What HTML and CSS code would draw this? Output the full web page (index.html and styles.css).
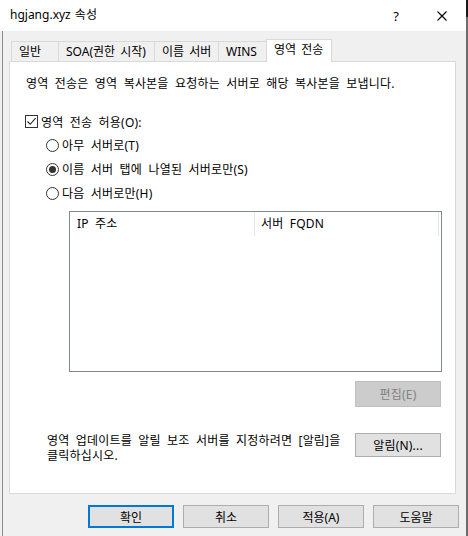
FILE: index.html
```html
<!DOCTYPE html>
<html lang="ko">
<head>
  <meta charset="UTF-8" />
  <title>hgjang.xyz 속성</title>
  <link rel="stylesheet" href="styles.css">
</head>
<body>

<div class="screen">
  <div class="window">
    <div class="titlebar">
      <span class="title">hgjang.xyz 속성</span>
      <span class="help">?</span>
      <span class="close">
        <svg width="10" height="10" viewBox="0 0 10 10"><path d="M0.5 0.5 L9.5 9.5 M9.5 0.5 L0.5 9.5" stroke="#000" stroke-width="1.1" fill="none"/></svg>
      </span>
    </div>

    <div class="dialog">
      <div class="tabs">
        <div class="tab t-general">일반</div>
        <div class="tab t-soa">SOA(권한 시작)</div>
        <div class="tab t-ns">이름 서버</div>
        <div class="tab t-wins">WINS</div>
        <div class="tab active t-xfer">영역 전송</div>
      </div>

      <div class="panel">
        <p class="desc">영역 전송은 영역 복사본을 요청하는 서버로 해당 복사본을 보냅니다.</p>

        <div class="check-row">
          <span class="checkbox">
            <svg width="11" height="11" viewBox="0 0 11 11"><path d="M1.5 5.5 L4.2 8.3 L9.6 2.2" stroke="#222" stroke-width="1.1" fill="none"/></svg>
          </span>
          <span>영역 전송 허용(O):</span>
        </div>

        <div class="radios">
          <div class="radio-row"><span class="radio"></span><span>아무 서버로(T)</span></div>
          <div class="radio-row"><span class="radio on"></span><span>이름 서버 탭에 나열된 서버로만(S)</span></div>
          <div class="radio-row"><span class="radio"></span><span>다음 서버로만(H)</span></div>
        </div>

        <div class="listview">
          <div class="lv-head">
            <div class="col col-ip">IP 주소</div>
            <div class="col col-fqdn">서버 FQDN</div>
          </div>
        </div>

        <div class="edit-row">
          <button class="btn btn-edit" disabled>편집(E)</button>
        </div>

        <div class="notify">
          <p>영역 업데이트를 알릴 보조 서버를 지정하려면 [알림]을<br>클릭하십시오.</p>
          <button class="btn btn-notify">알림(N)...</button>
        </div>
      </div>

      <div class="actions">
        <button class="btn btn-action default">확인</button>
        <button class="btn btn-action">취소</button>
        <button class="btn btn-action">적용(A)</button>
        <button class="btn btn-action">도움말</button>
      </div>
    </div>
  </div>
  <div class="edge"></div>
</div>

</body>
</html>
```

FILE: styles.css
```css
html, body {
  margin: 0;
  padding: 0;
  font-family: "Noto Sans", "Noto Sans CJK KR", sans-serif;
  font-size: 12px;
  color: #000;
  background: #f0f0f0;
}

.screen {
  display: flex;
  width: 468px;
  height: 536px;
  overflow: hidden;
}

.window {
  width: 466px;
  display: flex;
  flex-direction: column;
}

.edge {
  width: 2px;
  background: linear-gradient(to bottom, #1a1a1a 17px, #6d6d6d 17px);
}

/* title bar */
.titlebar {
  height: 31px;
  background: #fff;
  display: flex;
  align-items: center;
  padding: 0 19px 0 10px;
}

.title {
  line-height: 16px;
  padding-bottom: 1px;
  word-spacing: 1px;
}

.help {
  margin-left: auto;
  margin-right: 38px;
  font-size: 13px;
  line-height: 16px;
}

.close {
  display: flex;
  width: 10px;
  height: 10px;
}

/* dialog body */
.dialog {
  flex: 1;
  background: linear-gradient(to right, #f0f0f0 2px, #8c8c8c 2px, #8c8c8c 3px, #f0f0f0 3px);
  display: flex;
  flex-direction: column;
}

.tabs {
  display: flex;
  align-items: flex-end;
  padding: 8px 0 0 11px;
  word-spacing: 2px;
}

.tab {
  box-sizing: border-box;
  height: 20px;
  border: 1px solid #d9d9d9;
  border-bottom: none;
  margin-right: -1px;
  background: #f0f0f0;
  line-height: 19px;
  padding-left: 7px;
  white-space: nowrap;
}

.t-general { width: 48px; }
.t-soa { width: 97px; }
.t-ns { width: 65px; }
.t-wins { width: 49px; }

.tab.active {
  width: 66px;
  height: 23px;
  background: #fff;
  margin-bottom: -1px;
  position: relative;
  z-index: 1;
  line-height: 20px;
}

.panel {
  box-sizing: border-box;
  width: 447px;
  height: 433px;
  margin-left: 9px;
  background: #fff;
  border: 1px solid #d9d9d9;
  padding: 14px 14px 0 15px;
  display: flex;
  flex-direction: column;
  letter-spacing: 0.2px;
  word-spacing: 3px;
}

.desc {
  margin: 0 0 0 1px;
  line-height: 15px;
}

.check-row {
  display: flex;
  align-items: center;
  height: 23px;
  margin-top: 19px;
  gap: 3px;
}

.checkbox {
  box-sizing: border-box;
  width: 13px;
  height: 13px;
  border: 1px solid #333;
  background: #fff;
  display: flex;
  align-items: center;
  justify-content: center;
}

.radios {
  padding-left: 21px;
}

.radio-row {
  display: flex;
  align-items: center;
  height: 24px;
  gap: 3px;
}

.radio {
  box-sizing: border-box;
  width: 13px;
  height: 13px;
  border: 1px solid #333;
  border-radius: 50%;
  background: #fff;
  display: flex;
  align-items: center;
  justify-content: center;
}

.radio.on::after {
  content: "";
  width: 7px;
  height: 7px;
  border-radius: 50%;
  background: #333;
}

.listview {
  box-sizing: border-box;
  width: 373px;
  height: 161px;
  margin: 6px 0 0 44px;
  border: 1px solid #828790;
  background: #fff;
}

.lv-head {
  display: flex;
  height: 24px;
}

.col {
  box-sizing: border-box;
  height: 24px;
  line-height: 24px;
  border-right: 1px solid #e5e5e5;
  white-space: nowrap;
}

.col-ip {
  width: 185px;
  padding-left: 7px;
}

.col-fqdn {
  width: 184px;
  padding-left: 6px;
}

/* buttons */
.btn {
  box-sizing: border-box;
  font-family: inherit;
  font-size: 12px;
  letter-spacing: inherit;
  color: #000;
  background: #e1e1e1;
  border: 1px solid #adadad;
  border-radius: 0;
  padding: 0;
  margin: 0;
}

.edit-row {
  display: flex;
  justify-content: flex-end;
  margin-top: 9px;
}

.btn-edit {
  width: 86px;
  height: 26px;
  background: #cccccc;
  border-color: #bfbfbf;
  color: #838383;
}

.notify {
  display: flex;
  justify-content: space-between;
  align-items: flex-start;
  margin-top: 26px;
  padding-left: 22px;
}

.notify p {
  margin: 0;
  line-height: 15px;
}

.btn-notify {
  width: 86px;
  height: 24px;
  flex-shrink: 0;
}

.actions {
  display: flex;
  justify-content: flex-end;
  gap: 9px;
  padding: 11px 7px 0 0;
}

.btn-action {
  width: 86px;
  height: 23px;
}

.btn-action.default {
  border: 2px solid #0078d7;
}
```
